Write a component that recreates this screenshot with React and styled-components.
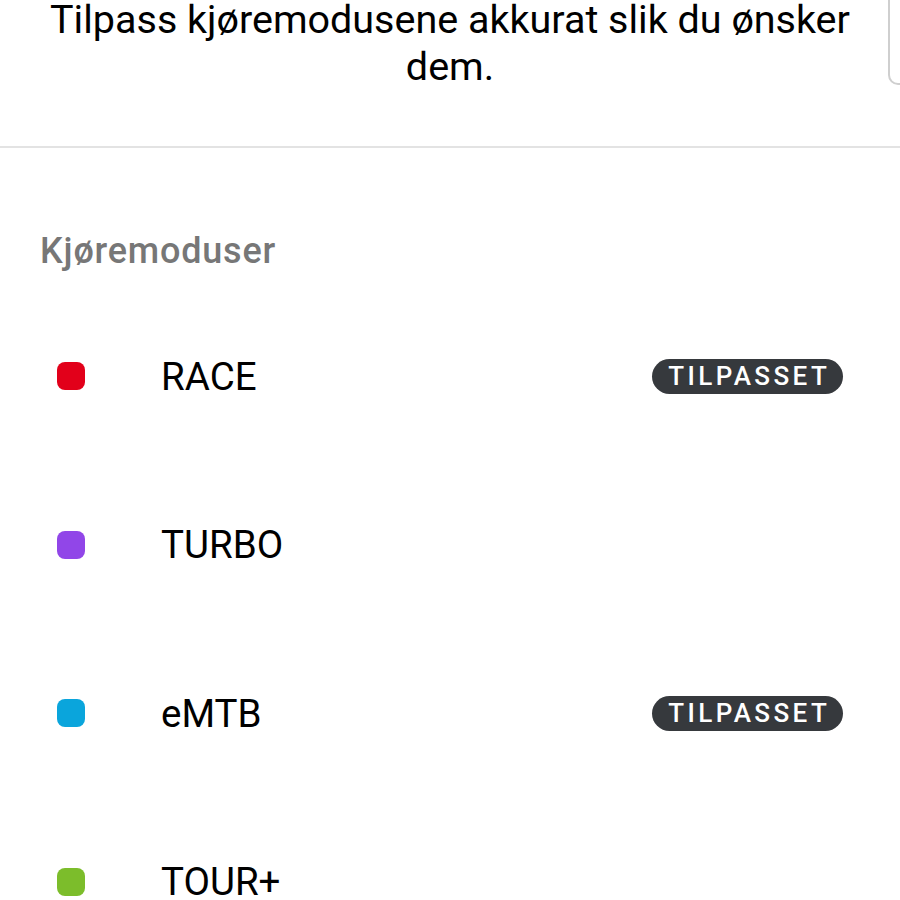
import React from "react";
import styled, { createGlobalStyle } from "styled-components";

const Global = createGlobalStyle`
  html, body { margin: 0; padding: 0; background: #fff; }
  body { font-family: Roboto, "Noto Sans", sans-serif; overflow: hidden; }
`;

const Page = styled.div`
  position: relative;
  width: 900px;
  height: 900px;
  overflow: hidden;
  background: #fff;
`;

const Header = styled.header`
  height: 148px;
  border-bottom: 2px solid #e3e3e3;
  box-sizing: border-box;
  display: flex;
  justify-content: center;
`;

const Title = styled.h1`
  margin: -4px 0 0;
  width: 830px;
  text-align: center;
  font-family: Roboto, sans-serif;
  font-weight: 400;
  font-size: 39.5px;
  line-height: 47px;
  color: #000;
`;

const EdgeCard = styled.div`
  position: absolute;
  top: -10px;
  left: 888px;
  width: 40px;
  height: 95px;
  border: 2px solid #cfcfcf;
  border-radius: 10px;
  box-sizing: border-box;
`;

const Section = styled.section`
  padding: 83px 0 0 40px;
`;

const SectionLabel = styled.div`
  font-size: 36px;
  font-weight: 500;
  color: #777;
  letter-spacing: 0.8px;
  line-height: 40px;
`;

const List = styled.ul`
  list-style: none;
  margin: 0;
  padding: 0;
  margin-top: 87px;
`;

const Row = styled.li`
  height: 168.5px;
  display: flex;
  align-items: flex-start;
  padding-right: 57px;
`;

const RowInner = styled.div`
  height: 36px;
  width: 100%;
  display: flex;
  align-items: center;
`;

const Dot = styled.span`
  width: 28px;
  height: 28px;
  border-radius: 8px;
  background: ${(p) => p.color};
  margin-left: 17px;
  flex: none;
`;

const Name = styled.span`
  margin-left: 76px;
  font-size: 38.5px;
  color: #000;
  flex: 1;
`;

const Badge = styled.span`
  height: 35px;
  width: 191px;
  border-radius: 18px;
  background: #36393d;
  color: #fff;
  font-size: 26px;
  font-weight: 500;
  letter-spacing: 3.4px;
  text-indent: 3.4px;
  display: flex;
  align-items: center;
  justify-content: center;
`;

const modes = [
  { name: "RACE", color: "#e2001a", custom: true },
  { name: "TURBO", color: "#9146e8", custom: false },
  { name: "eMTB", color: "#0aa5dc", custom: true },
  { name: "TOUR+", color: "#7cbd2b", custom: false },
];

export default function App() {
  return (
    <Page>
      <Global />
      <Header>
        <Title>Tilpass kjøremodusene akkurat slik du ønsker dem.</Title>
      </Header>
      <EdgeCard />
      <Section>
        <SectionLabel>Kjøremoduser</SectionLabel>
        <List>
          {modes.map((m) => (
            <Row key={m.name}>
              <RowInner>
                <Dot color={m.color} />
                <Name>{m.name}</Name>
                {m.custom && <Badge>TILPASSET</Badge>}
              </RowInner>
            </Row>
          ))}
        </List>
      </Section>
    </Page>
  );
}
